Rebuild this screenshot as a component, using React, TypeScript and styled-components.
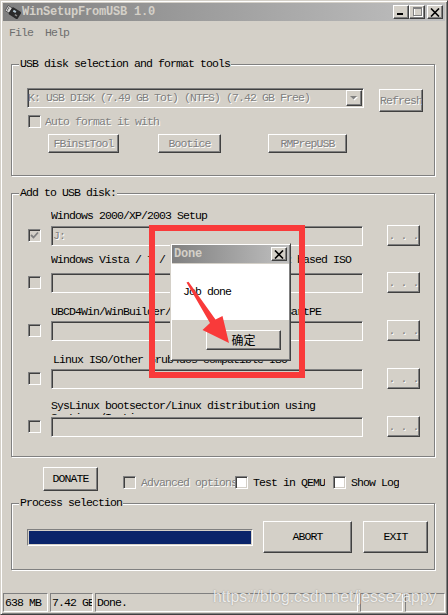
import React from "react";
import styled, { createGlobalStyle, css } from "styled-components";

const FACE = "#d4d0c8";
const SHADOW = "#808080";
const DARK = "#404040";
const LIGHT = "#ffffff";
const NAVY = "#0a246a";
const RED = "#f93a3a";

const GlobalStyle = createGlobalStyle`
  html, body { margin: 0; padding: 0; background: ${FACE}; }
  body {
    font-family: "Liberation Mono", "DejaVu Sans Mono", monospace;
    font-size: 11.5px;
    letter-spacing: -0.9px;
    line-height: 12px;
    color: #000;
  }
  *, *::before, *::after { box-sizing: border-box; }
`;

const raised = css`
  border: 1px solid;
  border-color: ${LIGHT} ${DARK} ${DARK} ${LIGHT};
  box-shadow: inset -1px -1px 0 ${SHADOW};
  background: ${FACE};
`;

const sunken = css`
  border: 1px solid;
  border-color: ${SHADOW} ${LIGHT} ${LIGHT} ${SHADOW};
  box-shadow: inset 1px 1px 0 ${DARK}, inset -1px -1px 0 ${FACE};
`;

const disabledText = css`
  color: ${SHADOW};
  text-shadow: 1px 1px 0 ${LIGHT};
`;

const Screen = styled.div`
  position: relative;
  width: 448px;
  height: 615px;
  overflow: hidden;
`;

const Window = styled.div`
  width: 448px;
  height: 615px;
  display: flex;
  flex-direction: column;
  border: 1px solid;
  border-color: ${FACE} ${DARK} ${DARK} ${FACE};
  box-shadow: inset 1px 1px 0 ${LIGHT}, inset -1px -1px 0 ${SHADOW};
  padding: 2px;
  background: ${FACE};
`;

const TitleBar = styled.div`
  height: 18px;
  flex-shrink: 0;
  display: flex;
  align-items: center;
  padding: 0 2px;
  background: linear-gradient(to right, #808080, #c0c0c0);
`;

const TitleText = styled.span`
  flex: 1;
  margin-left: 1px;
  font-weight: bold;
  font-size: 12px;
  letter-spacing: -0.2px;
  color: ${FACE};
  white-space: nowrap;
`;

const CaptionButton = styled.div<{ $ml?: number; $w?: number; $h?: number }>`
  ${raised};
  width: ${(p) => p.$w ?? 16}px;
  height: ${(p) => p.$h ?? 14}px;
  margin-left: ${(p) => p.$ml ?? 0}px;
  display: flex;
  align-items: center;
  justify-content: center;
  flex-shrink: 0;
`;

const MenuBar = styled.div`
  height: 19px;
  flex-shrink: 0;
  display: flex;
  align-items: center;
  padding-top: 4px;
`;

const MenuItem = styled.span`
  padding: 0 6px;
  color: #6e6e6e;
`;

const Content = styled.div`
  display: flex;
  flex-direction: column;
  padding: 0 10px 0 8px;
`;

const Group = styled.div<{ $mt: number; $pb: number }>`
  margin-top: ${(p) => p.$mt}px;
  padding-bottom: ${(p) => p.$pb}px;
  border: 1px solid ${SHADOW};
  box-shadow: inset 1px 1px 0 ${LIGHT}, 1px 1px 0 ${LIGHT};
  display: flex;
  flex-direction: column;
`;

const GroupLabel = styled.span`
  align-self: flex-start;
  margin: -7px 0 0 7px;
  padding: 0 1px;
  height: 12px;
  line-height: 12px;
  background: ${FACE};
  white-space: nowrap;
`;

const Row = styled.div<{ $mt: number; $pl: number }>`
  display: flex;
  align-items: flex-start;
  margin-top: ${(p) => p.$mt}px;
  padding-left: ${(p) => p.$pl}px;
`;

const Combo = styled.div`
  ${sunken};
  width: 337px;
  height: 20px;
  background: ${FACE};
  display: flex;
  align-items: center;
`;

const ComboText = styled.span`
  flex: 1;
  white-space: nowrap;
  overflow: hidden;
  ${disabledText};
`;

const DropButton = styled.div`
  ${raised};
  width: 16px;
  height: 16px;
  margin-right: 1px;
  display: flex;
  align-items: center;
  justify-content: center;
`;

const PushButton = styled.button<{ $w: number; $h: number; $ml?: number; $mt?: number; $off?: boolean }>`
  ${raised};
  width: ${(p) => p.$w}px;
  height: ${(p) => p.$h}px;
  margin: ${(p) => p.$mt ?? 0}px 0 0 ${(p) => p.$ml ?? 0}px;
  padding: 0;
  font: inherit;
  letter-spacing: inherit;
  line-height: 12px;
  color: #000;
  display: flex;
  align-items: center;
  justify-content: center;
  overflow: hidden;
  white-space: pre;
  flex-shrink: 0;
  ${(p) => p.$off && disabledText};
`;

const CheckBox = styled.div<{ $off?: boolean; $ml?: number; $mt?: number }>`
  ${sunken};
  width: 13px;
  height: 13px;
  flex-shrink: 0;
  margin: ${(p) => p.$mt ?? 0}px 0 0 ${(p) => p.$ml ?? 0}px;
  background: ${(p) => (p.$off ? FACE : LIGHT)};
  display: flex;
  align-items: center;
  justify-content: center;
`;

const CheckLabel = styled.span<{ $off?: boolean; $ml?: number; $w?: number }>`
  margin-left: ${(p) => p.$ml ?? 5}px;
  ${(p) => (p.$w ? `width: ${p.$w}px;` : "")}
  white-space: nowrap;
  overflow: hidden;
  line-height: 12px;
  ${(p) => p.$off && disabledText};
`;

const CheckLine = styled.div<{ $mt: number; $pl: number }>`
  display: flex;
  align-items: center;
  margin-top: ${(p) => p.$mt}px;
  padding-left: ${(p) => p.$pl}px;
`;

const DiskRow = styled.div<{ $mt: number }>`
  display: flex;
  flex-direction: column;
  margin-top: ${(p) => p.$mt}px;
`;

const Caption = styled.div<{ $h: number; $gap: number; $indent?: number }>`
  margin: 0 0 ${(p) => p.$gap}px ${(p) => 39 + (p.$indent ?? 0)}px;
  width: 312px;
  height: ${(p) => p.$h}px;
  line-height: 12px;
  overflow: hidden;
`;

const Field = styled.div`
  ${sunken};
  width: 312px;
  height: 20px;
  margin-left: 10px;
  padding-left: 1px;
  background: ${FACE};
  display: flex;
  align-items: center;
  ${disabledText};
`;

const Progress = styled.div`
  border: 1px solid;
  border-color: ${SHADOW} ${LIGHT} ${LIGHT} ${SHADOW};
  width: 226px;
  height: 17px;
  margin-top: 8px;
  padding: 1px;
`;

const ProgressFill = styled.div`
  height: 100%;
  background: ${NAVY};
`;

const StatusBar = styled.div`
  margin-top: auto;
  height: 19px;
  display: flex;
  gap: 2px;
  flex-shrink: 0;
`;

const StatusPanel = styled.div<{ $w: number }>`
  width: ${(p) => p.$w}px;
  height: 19px;
  border: 1px solid;
  border-color: ${SHADOW} ${LIGHT} ${LIGHT} ${SHADOW};
  padding-left: 1px;
  line-height: 17px;
  white-space: nowrap;
  overflow: hidden;
`;

const Dialog = styled.div`
  position: absolute;
  left: 170px;
  top: 243px;
  width: 121px;
  height: 118px;
  border: 1px solid;
  border-color: ${FACE} ${DARK} ${DARK} ${FACE};
  box-shadow: inset 1px 1px 0 ${LIGHT}, inset -1px -1px 0 ${SHADOW};
  padding: 1px;
  background: ${FACE};
  display: flex;
  flex-direction: column;
`;

const DialogTitle = styled.div`
  height: 18px;
  display: flex;
  align-items: center;
  padding: 0 2px 0 1px;
  background: linear-gradient(to right, #808080, #c0c0c0);
`;

const DialogBody = styled.div`
  height: 56px;
  margin-top: 1px;
  background: ${LIGHT};
  padding: 22px 0 0 11px;
  white-space: nowrap;
`;

const OkButton = styled(PushButton)`
  font-family: "Noto Sans CJK SC", "Noto Sans CJK JP", sans-serif;
  font-size: 12px;
  letter-spacing: 0;
`;

const RedFrame = styled.div`
  position: absolute;
  left: 149px;
  top: 225px;
  width: 156px;
  height: 153px;
  border: 6px solid ${RED};
  pointer-events: none;
`;

const Overlay = styled.svg`
  position: absolute;
  left: 0;
  top: 0;
  pointer-events: none;
`;

const Watermark = styled.div`
  position: absolute;
  left: 213px;
  top: 588px;
  font-family: "Liberation Sans", Arial, sans-serif;
  font-size: 15.7px;
  letter-spacing: 0;
  line-height: 18px;
  color: rgba(255, 255, 255, 0.82);
  text-shadow: 0 0 1.5px rgba(0, 0, 0, 0.35);
  white-space: nowrap;
  pointer-events: none;
`;

const UsbIcon = () => (
  <svg width="16" height="16" viewBox="0 0 16 16">
    <g transform="rotate(32 8 8)">
      <rect x="0.5" y="5" width="5" height="6" fill="#d8d8d8" stroke="#4a4a4a" strokeWidth="0.8" />
      <rect x="1.5" y="6.5" width="1.5" height="1.2" fill="#555" />
      <rect x="1.5" y="8.5" width="1.5" height="1.2" fill="#555" />
      <rect x="5" y="3.8" width="10.5" height="8.4" rx="1.6" fill="#2a2a2a" />
      <rect x="7.5" y="5.6" width="3" height="2" fill="#b0c4d0" />
      <rect x="11" y="8.5" width="2.5" height="1.5" fill="#888" />
    </g>
  </svg>
);

const MinGlyph = () => (
  <svg width="14" height="12" viewBox="0 0 14 12">
    <rect x="3" y="7" width="6" height="2" fill="#000" />
  </svg>
);

const MaxGlyph = () => (
  <svg width="14" height="12" viewBox="0 0 14 12">
    <rect x="3.5" y="1.5" width="8" height="8" fill="none" stroke={LIGHT} transform="translate(1 1)" />
    <rect x="3.5" y="1.5" width="8" height="8" fill="none" stroke={SHADOW} />
    <rect x="3" y="2" width="9" height="1" fill={SHADOW} />
  </svg>
);

const CloseGlyph = () => (
  <svg width="10" height="9" viewBox="0 0 10 9">
    <path d="M1 0.5 L9 8.5 M9 0.5 L1 8.5" stroke="#000" strokeWidth="1.6" />
  </svg>
);

const CheckMark = () => (
  <svg width="9" height="9" viewBox="0 0 9 9">
    <path d="M1 4 L3.5 6.5 L8 1.5" fill="none" stroke={SHADOW} strokeWidth="1.8" />
  </svg>
);

const DropArrow = () => (
  <svg width="8" height="5" viewBox="0 0 8 5">
    <path d="M1 1 H8 L4.5 4.5 Z" fill={LIGHT} />
    <path d="M0 0 H7 L3.5 3.5 Z" fill={SHADOW} />
  </svg>
);

type Disk = {
  caption: string;
  value?: string;
  checked?: boolean;
  mt: number;
  gap: number;
  h: number;
  indent?: number;
};

const disks: Disk[] = [
  { caption: "Windows 2000/XP/2003 Setup", value: "J:", checked: true, mt: 11, gap: 4, h: 12 },
  { caption: "Windows Vista / 7 / 8 / Server 2008/2012 based ISO", mt: 8, gap: 7, h: 12 },
  { caption: "UBCD4Win/WinBuilder/Windows FLPC setup/BartPE", mt: 13, gap: 3, h: 12 },
  { caption: "Linux ISO/Other Grub4dos compatible ISO", mt: 13, gap: 3, h: 12, indent: 2 },
  {
    caption: "SysLinux bootsector/Linux distribution using SysLinux/IsoLinux",
    mt: 11,
    gap: 2,
    h: 15,
  },
];

export default function App() {
  return (
    <Screen>
      <GlobalStyle />
      <Window>
        <TitleBar>
          <UsbIcon />
          <TitleText>WinSetupFromUSB 1.0</TitleText>
          <CaptionButton>
            <MinGlyph />
          </CaptionButton>
          <CaptionButton>
            <MaxGlyph />
          </CaptionButton>
          <CaptionButton $ml={2}>
            <CloseGlyph />
          </CaptionButton>
        </TitleBar>
        <MenuBar>
          <MenuItem>File</MenuItem>
          <MenuItem>Help</MenuItem>
        </MenuBar>
        <Content>
          <Group $mt={24} $pb={22}>
            <GroupLabel>USB disk selection and format tools</GroupLabel>
            <Row $mt={18} $pl={15}>
              <Combo>
                <ComboText>K: USB DISK (7.49 GB Tot) (NTFS) (7.42 GB Free)</ComboText>
                <DropButton>
                  <DropArrow />
                </DropButton>
              </Combo>
              <PushButton $w={44} $h={23} $ml={15} $mt={1} $off>
                Refresh
              </PushButton>
            </Row>
            <CheckLine $mt={3} $pl={16}>
              <CheckBox $off />
              <CheckLabel $off $ml={4} $w={122}>
                Auto format it with :
              </CheckLabel>
            </CheckLine>
            <Row $mt={6} $pl={36}>
              <PushButton $w={71} $h={19} $off>
                FBinstTool
              </PushButton>
              <PushButton $w={63} $h={19} $ml={39} $off>
                Bootice
              </PushButton>
              <PushButton $w={79} $h={19} $ml={47} $off>
                RMPrepUSB
              </PushButton>
            </Row>
          </Group>

          <Group $mt={17} $pb={19}>
            <GroupLabel>Add to USB disk:</GroupLabel>
            {disks.map((d) => (
              <DiskRow key={d.caption} $mt={d.mt}>
                <Caption $h={d.h} $gap={d.gap} $indent={d.indent}>
                  {d.caption}
                </Caption>
                <Row $mt={0} $pl={16}>
                  <CheckBox $off $mt={3}>
                    {d.checked && <CheckMark />}
                  </CheckBox>
                  <Field>{d.value ?? ""}</Field>
                  <PushButton $w={33} $h={21} $ml={24} $mt={-1} $off>
                    {". . ."}
                  </PushButton>
                </Row>
              </DiskRow>
            ))}
          </Group>

          <Row $mt={10} $pl={32}>
            <PushButton $w={55} $h={24}>
              DONATE
            </PushButton>
            <CheckLine $mt={9} $pl={0}>
              <CheckBox $off $ml={25} />
              <CheckLabel $off $ml={5} $w={94}>
                Advanced options
              </CheckLabel>
              <CheckBox />
              <CheckLabel $ml={5}>Test in QEMU</CheckLabel>
              <CheckBox $ml={8} />
              <CheckLabel $ml={5}>Show Log</CheckLabel>
            </CheckLine>
          </Row>

          <Group $mt={12} $pb={16}>
            <GroupLabel>Process selection</GroupLabel>
            <Row $mt={12} $pl={15}>
              <Progress>
                <ProgressFill />
              </Progress>
              <PushButton $w={89} $h={32} $ml={10}>
                ABORT
              </PushButton>
              <PushButton $w={65} $h={32} $ml={11}>
                EXIT
              </PushButton>
            </Row>
          </Group>
        </Content>
        <StatusBar>
          <StatusPanel $w={45}>638 MB</StatusPanel>
          <StatusPanel $w={43}>7.42 GB</StatusPanel>
          <StatusPanel $w={263}>Done.</StatusPanel>
          <StatusPanel $w={43} />
          <StatusPanel $w={40} />
        </StatusBar>
      </Window>

      <Dialog>
        <DialogTitle>
          <TitleText>Done</TitleText>
          <CaptionButton $w={16} $h={14}>
            <CloseGlyph />
          </CaptionButton>
        </DialogTitle>
        <DialogBody>Job done</DialogBody>
        <Row $mt={10} $pl={34}>
          <OkButton $w={75} $h={20}>
            确定
          </OkButton>
        </Row>
      </Dialog>

      <RedFrame />
      <Overlay width="448" height="615" viewBox="0 0 448 615">
        <polygon
          points="186.5,282.5 188.5,281.8 215.5,319.5 222.5,316 229,343 202.5,330 210,323"
          fill={RED}
        />
      </Overlay>
      <Watermark>https://blog.csdn.net/jessezappy</Watermark>
    </Screen>
  );
}
